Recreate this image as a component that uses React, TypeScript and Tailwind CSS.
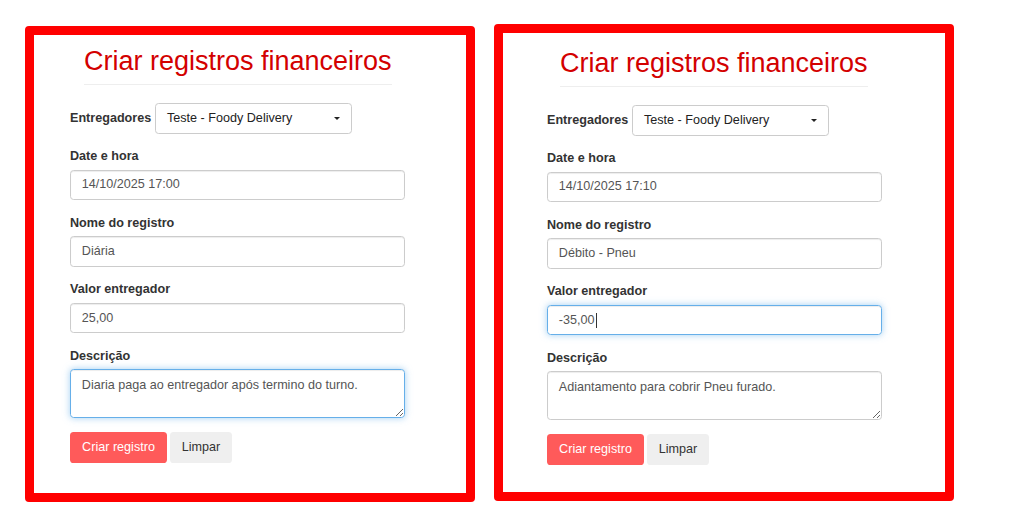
import React from "react";

type Registro = {
    data: string;
    nome: string;
    valor: string;
    descricao: string;
    foco: "valor" | "descricao";
};

const inputBase =
    "flex h-[30.6px] w-[335px] items-center rounded-[3.6px] border px-[10.8px] text-[12.6px] text-[#555]";
const normal = "border-[#ccc] shadow-[inset_0_1px_1px_rgba(0,0,0,0.075)]";
const focado =
    "border-[#66afe9] shadow-[inset_0_1px_1px_rgba(0,0,0,0.075),0_0_7px_rgba(102,175,233,0.6)]";

function Label({ children }: { children: React.ReactNode }) {
    return <label className="mb-[4.5px] block text-[12.6px] font-bold leading-[18px] text-[#333]">{children}</label>;
}

function RegistroForm({ reg, box, titleOffset }: { reg: Registro; box: string; titleOffset: string }) {
    return (
        <div className={box}>
            {/* Titulo */}
            <div className={`w-fit ${titleOffset}`}>
                <h2 className="text-[27px] font-normal leading-[29.7px] text-[#d30000]">Criar registros financeiros</h2>
                <div className="mt-[7.8px] border-t border-[#eee]" />
            </div>

            {/* Entregadores */}
            <div className="mt-[18px] flex items-center gap-[4px]">
                <span className="text-[12.6px] font-bold leading-[18px] text-[#333]">Entregadores</span>
                <div className="flex h-[30.6px] w-[197px] items-center justify-between rounded-[3.6px] border border-[#ccc] pl-[10.8px] pr-[11px] text-[12.6px] text-[#222]">
                    <span>Teste - Foody Delivery</span>
                    <span className="h-0 w-0 border-x-[3px] border-t-[3px] border-x-transparent border-t-[#222]" />
                </div>
            </div>

            <div className="mt-[13.5px]">
                <Label>Date e hora</Label>
                <div className={`${inputBase} ${normal}`}>{reg.data}</div>
            </div>

            <div className="mt-[13.5px]">
                <Label>Nome do registro</Label>
                <div className={`${inputBase} ${normal}`}>{reg.nome}</div>
            </div>

            <div className="mt-[13.5px]">
                <Label>Valor entregador</Label>
                <div className={`${inputBase} ${reg.foco === "valor" ? focado : normal}`}>
                    {reg.valor}
                    {reg.foco === "valor" && <span className="ml-px inline-block h-[15px] w-px bg-[#333]" />}
                </div>
            </div>

            <div className="mt-[13.5px]">
                <Label>Descrição</Label>
                <textarea
                    readOnly
                    defaultValue={reg.descricao}
                    className={`block h-[49px] w-[335px] rounded-[3.6px] border px-[10.8px] py-[5.4px] text-[12.6px] leading-[18px] text-[#555] outline-none ${
                        reg.foco === "descricao" ? focado : normal
                    }`}
                />
            </div>

            <div className="mt-[14px] flex gap-[3px]">
                <button className="h-[30.6px] w-[97px] rounded-[3.6px] bg-[#ff5a5a] text-[12.6px] text-white">Criar registro</button>
                <button className="h-[30.6px] w-[62px] rounded-[3.6px] bg-[#efefef] text-[12.6px] text-[#333]">Limpar</button>
            </div>
        </div>
    );
}

export default function App() {
    const primeiro: Registro = {
        data: "14/10/2025 17:00",
        nome: "Diária",
        valor: "25,00",
        descricao: "Diaria paga ao entregador após termino do turno.",
        foco: "descricao",
    };
    const segundo: Registro = {
        data: "14/10/2025 17:10",
        nome: "Débito - Pneu",
        valor: "-35,00",
        descricao: "Adiantamento para cobrir Pneu furado.",
        foco: "valor",
    };

    return (
        <div className="flex h-[532px] w-[1010px] items-start bg-white pl-[25px] font-['Liberation_Sans',Arial,sans-serif]">
            <RegistroForm
                reg={primeiro}
                titleOffset="ml-[14px]"
                box="mt-[26px] h-[476px] w-[450px] rounded-[4px] border-[9px] border-[#ff0000] bg-white pl-[36px] pt-[11.5px]"
            />
            <RegistroForm
                reg={segundo}
                titleOffset="ml-[13px]"
                box="ml-[19px] mt-[24px] h-[477px] w-[460px] rounded-[4px] border-[9px] border-[#ff0000] bg-white pl-[44px] pt-[15.5px]"
            />
        </div>
    );
}
